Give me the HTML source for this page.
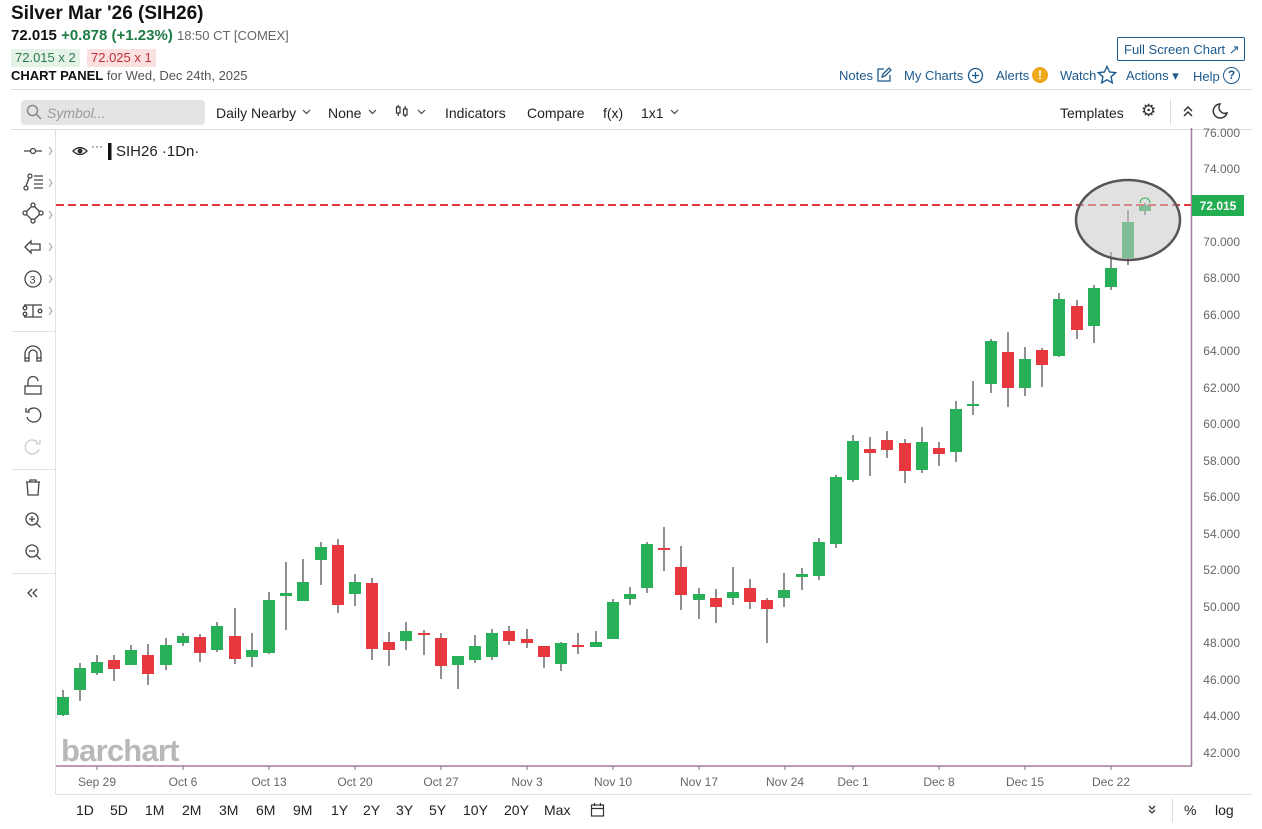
<!DOCTYPE html>
<html><head><meta charset="utf-8"><style>
*{margin:0;padding:0;box-sizing:border-box}
body{width:1262px;height:829px;background:#fff;font-family:"Liberation Sans",sans-serif;color:#222;position:relative;overflow:hidden}
.a{position:absolute;white-space:nowrap}
.lnk{color:#1c5a8e;font-size:13px}
.tb{font-size:14px;color:#222}
.cv{font-size:11px;color:#444}
.tm{font-size:14px;color:#222;top:802px}
.ax{font-size:12px;color:#666;right:22px}
.dt{font-size:12px;color:#666;top:775px;transform:translateX(-50%)}
</style></head><body>
<div class="a" style="left:11px;top:3px;font-size:19px;font-weight:bold;color:#111">Silver Mar '26 (SIH26)</div>
<div class="a" style="left:11px;top:27px;font-size:15px"><b style="color:#111">72.015</b> <b style="color:#1e7b45">+0.878 (+1.23%)</b> <span style="font-size:13px;color:#666">18:50 CT [COMEX]</span></div>
<div class="a" style="left:11px;top:49px;height:18px;padding:1px 4px;background:#e4f2e8;color:#2d7a4c;font-size:13px">72.015 x 2</div>
<div class="a" style="left:87px;top:49px;height:18px;padding:1px 4px;background:#fbe0e0;color:#c0303a;font-size:13px">72.025 x 1</div>
<div class="a" style="left:11px;top:68px;font-size:13px;color:#555"><b style="color:#111">CHART PANEL</b> for Wed, Dec 24th, 2025</div>
<div class="a" style="left:1117px;top:37px;width:128px;height:24px;border:1px solid #1c5a8e;border-radius:2px;font-size:13px;color:#1c5a8e;padding:4px 0 0 6px">Full Screen Chart ↗</div>
<div class="a lnk" style="left:839px;top:68px">Notes</div>
<svg class="a" style="left:876px;top:67px" width="16" height="16" viewBox="0 0 16 16" fill="none" stroke="#1c5a8e" stroke-width="1.3"><path d="M8 2H2v12h12V8"/><path d="M6 10l1-3 6-6 2 2-6 6z"/></svg>
<div class="a lnk" style="left:904px;top:68px">My Charts</div>
<svg class="a" style="left:967px;top:67px" width="17" height="17" viewBox="0 0 17 17" fill="none" stroke="#1c5a8e" stroke-width="1.3"><circle cx="8.5" cy="8.5" r="7"/><path d="M8.5 5v7M5 8.5h7"/></svg>
<div class="a lnk" style="left:996px;top:68px">Alerts</div>
<div class="a" style="left:1032px;top:67px;width:16px;height:16px;border-radius:50%;background:#f0a81c;color:#fff;font-size:12px;font-weight:bold;text-align:center;line-height:16px">!</div>
<div class="a lnk" style="left:1060px;top:68px">Watch</div>
<svg class="a" style="left:1097px;top:65px" width="20" height="19" viewBox="0 0 20 19" fill="none" stroke="#1c5a8e" stroke-width="1.4"><path d="M10 1.5l2.6 5.5 6 .7-4.5 4.1 1.2 6-5.3-3-5.3 3 1.2-6L1.4 7.7l6-.7z"/></svg>
<div class="a lnk" style="left:1126px;top:68px">Actions ▾</div>
<div class="a lnk" style="left:1193px;top:69px">Help</div>
<div class="a" style="left:1223px;top:67px;width:17px;height:17px;border:1.5px solid #1c5a8e;border-radius:50%;color:#1c5a8e;font-size:12px;font-weight:bold;text-align:center;line-height:14px">?</div>
<div class="a" style="left:11px;top:89px;width:1241px;height:1px;background:#ddd"></div>
<div class="a" style="left:21px;top:100px;width:184px;height:25px;background:#e4e4e4;border-radius:4px"></div>
<svg class="a" style="left:26px;top:104px" width="16" height="16" viewBox="0 0 16 16" fill="none" stroke="#888" stroke-width="1.5"><circle cx="6.5" cy="6.5" r="5"/><path d="M10 10l5 5"/></svg>
<div class="a" style="left:47px;top:105px;font-size:14px;color:#999;font-style:italic">Symbol...</div>
<div class="a tb" style="left:216px;top:105px">Daily Nearby</div>
<svg class="a" style="left:302px;top:109px" width="9" height="6" viewBox="0 0 9 6" fill="none" stroke="#444" stroke-width="1.2"><path d="M1 1l3.5 3.5L8 1"/></svg>
<div class="a tb" style="left:328px;top:105px">None</div>
<svg class="a" style="left:368px;top:109px" width="9" height="6" viewBox="0 0 9 6" fill="none" stroke="#444" stroke-width="1.2"><path d="M1 1l3.5 3.5L8 1"/></svg>
<svg class="a" style="left:395px;top:104px" width="14" height="14" viewBox="0 0 14 14" fill="none" stroke="#333" stroke-width="1.2"><rect x="1.5" y="3" width="3.5" height="6"/><path d="M3.2 1v2M3.2 9v3"/><rect x="8.5" y="5" width="3.5" height="6"/><path d="M10.2 2v3M10.2 11v2"/></svg>
<svg class="a" style="left:417px;top:109px" width="9" height="6" viewBox="0 0 9 6" fill="none" stroke="#444" stroke-width="1.2"><path d="M1 1l3.5 3.5L8 1"/></svg>
<div class="a tb" style="left:445px;top:105px">Indicators</div>
<div class="a tb" style="left:527px;top:105px">Compare</div>
<div class="a tb" style="left:603px;top:105px">f(x)</div>
<div class="a tb" style="left:641px;top:105px">1x1</div>
<svg class="a" style="left:670px;top:109px" width="9" height="6" viewBox="0 0 9 6" fill="none" stroke="#444" stroke-width="1.2"><path d="M1 1l3.5 3.5L8 1"/></svg>
<div class="a tb" style="left:1060px;top:105px">Templates</div>
<div class="a" style="left:1141px;top:101px;font-size:17px;color:#333">⚙</div>
<div class="a" style="left:1170px;top:99px;width:1px;height:26px;background:#ddd"></div>
<svg class="a" style="left:1181px;top:104px" width="14" height="14" viewBox="0 0 14 14" fill="none" stroke="#333" stroke-width="1.5"><path d="M3 7l4-4 4 4M3 12l4-4 4 4"/></svg>
<svg class="a" style="left:1211px;top:102px" width="18" height="18" viewBox="0 0 18 18" fill="none" stroke="#333" stroke-width="1.5"><path d="M9 2a7 7 0 1 0 7 9A6 6 0 0 1 9 2z"/></svg>
<div class="a" style="left:11px;top:129px;width:1241px;height:1px;background:#ddd"></div>
<div class="a" style="left:55px;top:130px;width:1px;height:664px;background:#e2e2e2"></div>
<div class="a" style="left:12px;top:331px;width:43px;height:1px;background:#e2e2e2"></div>
<div class="a" style="left:12px;top:469px;width:43px;height:1px;background:#e2e2e2"></div>
<div class="a" style="left:12px;top:573px;width:43px;height:1px;background:#e2e2e2"></div>
<svg class="a" style="left:0;top:130px" width="56" height="480" viewBox="0 0 56 480" fill="none" stroke="#444" stroke-width="1.3">
<g stroke="#999" stroke-width="1"><path d="M49 17l3 4-3 4M49 49l3 4-3 4M49 81l3 4-3 4M49 113l3 4-3 4M49 145l3 4-3 4M49 177l3 4-3 4"/></g>
<path d="M24 21h6M36 21h6"/><circle cx="33" cy="21" r="2.5"/>
<circle cx="26" cy="58" r="2"/><circle cx="30" cy="46" r="2"/><path d="M26 56l3-8M34 46h9M34 50h9M34 54h9M34 58h9"/>
<path d="M33 75l8 8-8 8-8-8z"/><circle cx="33" cy="75" r="2" fill="#fff"/><circle cx="41" cy="83" r="2" fill="#fff"/><circle cx="33" cy="91" r="2" fill="#fff"/><circle cx="25" cy="83" r="2" fill="#fff"/>
<path d="M25 117l6-6v3h9v6h-9v3z"/>
<circle cx="33" cy="149" r="8"/><text x="29.5" y="153.5" font-size="11" fill="#444" stroke="none" font-family="Liberation Sans">3</text>
<path d="M24 175h18M24 187h18M33 175v12"/><circle cx="25" cy="178" r="1.8"/><circle cx="25" cy="184" r="1.8"/><circle cx="40" cy="181" r="1.8"/>
<path d="M25 231v-7a8 8 0 0 1 16 0v7h-4v-7a4 4 0 0 0-8 0v7z"/><path d="M25 228h4M37 228h4"/>
<rect x="25" y="256" width="16" height="8"/><path d="M28 256v-4a5 5 0 0 1 10-1"/>
<path d="M28 281a7 7 0 1 1-1 6"/><path d="M26 278v4h4"/>
<g stroke="#ccc"><path d="M38 313a7 7 0 1 0 1 6"/><path d="M40 310v4h-4"/></g>
<path d="M26 352h14M30 352v-2h6v2M27 352l1 13h10l1-13"/>
<circle cx="32" cy="389" r="6"/><path d="M36.5 393.5l4 4M29 389h6M32 386v6"/>
<circle cx="32" cy="421" r="6"/><path d="M36.5 425.5l4 4M29 421h6"/>
<path d="M32 459l-4 4 4 4M37 459l-4 4 4 4"/>
</svg>
<svg class="a" style="left:0;top:0" width="1262" height="829" viewBox="0 0 1262 829">
<text x="61" y="761" font-size="31" font-weight="bold" fill="#b8b8b8" font-family="Liberation Sans" letter-spacing="-0.8">barchart</text>
<g id="c"></g>
<line x1="56" y1="205" x2="1191" y2="205" stroke="#e03a3e" stroke-width="2" stroke-dasharray="8,4"/>
<ellipse cx="1128" cy="220" rx="52" ry="40" fill="rgba(200,200,200,0.55)" stroke="#555" stroke-width="2.5"/>
<path d="M1140 203a5 5 0 0 1 10 0" fill="none" stroke="#2db15a" stroke-width="1"/>
<line x1="1191.5" y1="128" x2="1191.5" y2="766" stroke="#a57a9a" stroke-width="1.5"/>
<line x1="56" y1="766" x2="1192" y2="766" stroke="#a57a9a" stroke-width="1.5"/>
<g stroke="#777" stroke-width="1"><path d="M97 766v4M183 766v4M269 766v4M355 766v4M441 766v4M527 766v4M613 766v4M699 766v4M785 766v4M853 766v4M939 766v4M1025 766v4M1111 766v4"/></g>
<rect x="1192" y="195" width="52" height="21" fill="#22ad50"/>
<text x="1218" y="210" font-size="12" font-weight="bold" fill="#fff" text-anchor="middle" font-family="Liberation Sans">72.015</text>
<rect x="108" y="143" width="3.5" height="17" fill="#111"/>
<path d="M73 151q7-7 14 0q-7 7-14 0z" fill="none" stroke="#333" stroke-width="1.3"/><circle cx="80" cy="151" r="2.5" fill="#333"/>
<text x="91" y="150" font-size="12" fill="#333" font-family="Liberation Sans">···</text>
<text x="116" y="156" font-size="15" fill="#222" font-family="Liberation Sans">SIH26 ·1Dn·</text>
</svg>
<div class="a ax" style="top:126px">76.000</div>
<div class="a ax" style="top:162px">74.000</div>
<div class="a ax" style="top:235px">70.000</div>
<div class="a ax" style="top:271px">68.000</div>
<div class="a ax" style="top:308px">66.000</div>
<div class="a ax" style="top:344px">64.000</div>
<div class="a ax" style="top:381px">62.000</div>
<div class="a ax" style="top:417px">60.000</div>
<div class="a ax" style="top:454px">58.000</div>
<div class="a ax" style="top:490px">56.000</div>
<div class="a ax" style="top:527px">54.000</div>
<div class="a ax" style="top:563px">52.000</div>
<div class="a ax" style="top:600px">50.000</div>
<div class="a ax" style="top:636px">48.000</div>
<div class="a ax" style="top:673px">46.000</div>
<div class="a ax" style="top:709px">44.000</div>
<div class="a ax" style="top:746px">42.000</div>
<div class="a dt" style="left:97px">Sep 29</div>
<div class="a dt" style="left:183px">Oct 6</div>
<div class="a dt" style="left:269px">Oct 13</div>
<div class="a dt" style="left:355px">Oct 20</div>
<div class="a dt" style="left:441px">Oct 27</div>
<div class="a dt" style="left:527px">Nov 3</div>
<div class="a dt" style="left:613px">Nov 10</div>
<div class="a dt" style="left:699px">Nov 17</div>
<div class="a dt" style="left:785px">Nov 24</div>
<div class="a dt" style="left:853px">Dec 1</div>
<div class="a dt" style="left:939px">Dec 8</div>
<div class="a dt" style="left:1025px">Dec 15</div>
<div class="a dt" style="left:1111px">Dec 22</div>
<div class="a" style="left:56px;top:794px;width:1196px;height:1px;background:#e2e2e2"></div>
<div class="a tm" style="left:76px">1D</div><div class="a tm" style="left:110px">5D</div><div class="a tm" style="left:145px">1M</div><div class="a tm" style="left:182px">2M</div><div class="a tm" style="left:219px">3M</div><div class="a tm" style="left:256px">6M</div><div class="a tm" style="left:293px">9M</div><div class="a tm" style="left:331px">1Y</div><div class="a tm" style="left:363px">2Y</div><div class="a tm" style="left:396px">3Y</div><div class="a tm" style="left:429px">5Y</div><div class="a tm" style="left:463px">10Y</div><div class="a tm" style="left:504px">20Y</div><div class="a tm" style="left:544px">Max</div>
<svg class="a" style="left:590px;top:802px" width="15" height="15" viewBox="0 0 15 15" fill="none" stroke="#333" stroke-width="1.2"><rect x="1.5" y="3" width="12" height="11"/><path d="M1.5 6.5h12M4.5 1v3M10.5 1v3"/></svg>
<svg class="a" style="left:1146px;top:804px" width="12" height="12" viewBox="0 0 12 12" fill="none" stroke="#333" stroke-width="1.3"><path d="M3 2l3 3 3-3M3 6l3 3 3-3"/></svg>
<div class="a" style="left:1172px;top:798px;width:1px;height:24px;background:#ddd"></div>
<div class="a tm" style="left:1184px">%</div>
<div class="a tm" style="left:1215px">log</div>
<script>
var d=[[63,690,697,715,716,1],[80,663,668,690,701,1],[97,655,662,673,675,1],[114,655,660,669,681,0],[131,645,650,665,665,1],[148,644,655,674,685,0],[166,638,645,665,670,1],[183,633,636,643,646,1],[200,634,637,653,662,0],[217,622,626,650,652,1],[235,608,636,659,664,0],[252,633,650,657,667,1],[269,592,600,653,654,1],[286,562,593,596,630,1],[303,559,582,601,601,1],[321,542,547,560,585,1],[338,539,545,605,613,0],[355,574,582,594,606,1],[372,578,583,649,660,0],[389,632,642,650,666,0],[406,622,631,641,650,1],[424,630,633,634,655,0],[441,633,638,666,679,0],[458,656,656,665,689,1],[475,635,646,660,663,1],[492,629,633,657,660,1],[509,626,631,641,645,0],[527,629,639,643,648,0],[544,646,646,657,668,0],[561,642,643,664,671,1],[578,633,645,647,654,0],[596,631,642,647,647,1],[613,599,602,639,639,1],[630,587,594,599,605,1],[647,542,544,588,593,1],[664,527,548,550,571,0],[681,546,567,595,610,0],[699,588,594,600,619,1],[716,589,598,607,623,0],[733,567,592,598,605,1],[750,579,588,602,609,0],[767,598,600,609,643,0],[784,573,590,598,607,1],[802,568,574,577,590,1],[819,538,542,576,580,1],[836,475,477,544,548,1],[853,435,441,480,482,1],[870,437,449,453,476,0],[887,431,440,450,458,0],[905,439,443,471,483,0],[922,427,442,470,473,1],[939,442,448,454,466,0],[956,401,409,452,462,1],[973,381,404,406,415,1],[991,339,341,384,393,1],[1008,332,352,388,407,0],[1025,347,359,388,396,1],[1042,348,350,365,387,0],[1059,293,299,356,357,1],[1077,300,306,330,339,0],[1094,285,288,326,343,1],[1111,252,268,287,290,1],[1128,210,222,258,265,1],[1145,203,205,211,215,1]];
var s='';d.forEach(function(c){var col=c[5]?'#27b058':'#e8383f';s+='<line x1="'+c[0]+'" y1="'+c[1]+'" x2="'+c[0]+'" y2="'+c[4]+'" stroke="#555" stroke-width="1.3"/><rect x="'+(c[0]-6)+'" y="'+c[2]+'" width="12" height="'+Math.max(2,c[3]-c[2])+'" fill="'+col+'"/>';});
document.getElementById('c').innerHTML=s;
</script>
</body></html>
